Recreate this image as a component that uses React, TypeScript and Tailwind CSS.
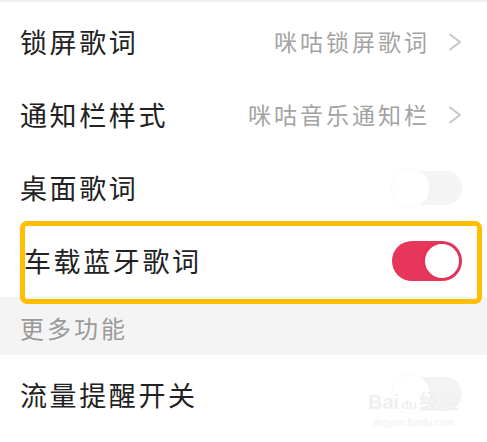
import React from 'react';

const font = { fontFamily: '"Noto Sans CJK SC", "Noto Sans", sans-serif' };

function Chevron() {
  return (
    <svg width="14" height="18" viewBox="0 0 14 18" className="shrink-0">
      <polyline points="2,1.5 12,9 2,16.5" fill="none" stroke="#c4c4c4" strokeWidth="1.8" strokeLinejoin="round" strokeLinecap="round" />
    </svg>
  );
}

function Toggle({ on }: { on: boolean }) {
  if (on) {
    return (
      <div className="w-[70px] h-[40px] rounded-full bg-[#e8365b] flex items-center justify-end pr-[1px]">
        <div className="w-[38px] h-[38px] rounded-full bg-white border-2 border-[#e0325a]" />
      </div>
    );
  }
  return (
    <div className="w-[70px] h-[34px] rounded-full bg-[#f4f4f4] flex items-center">
      <div className="w-[38px] h-[38px] rounded-full bg-white shadow-[0_0_3px_rgba(0,0,0,0.06)]" />
    </div>
  );
}

function Row({ title, value, toggle, h = 'h-[73px]', pl = 'pl-[20px]' }: { title: string; value?: string; toggle?: boolean; h?: string; pl?: string }) {
  return (
    <div className={`flex items-center justify-between pr-[25px] bg-white ${h} ${pl}`}>
      <span className="text-[27px] tracking-[2.6px] text-[#222] leading-none">{title}</span>
      {value !== undefined ? (
        <div className="flex items-center gap-[18px]">
          <span className="text-[23px] tracking-[3px] text-[#a3a3a3] leading-none">{value}</span>
          <Chevron />
        </div>
      ) : (
        <Toggle on={!!toggle} />
      )}
    </div>
  );
}

export default function App() {
  return (
    <div className="relative w-[487px] h-[442px] overflow-hidden bg-white" style={font}>
      <div className="h-[5px] border-t-2 border-[#f0f0f0]" />
      <Row title="锁屏歌词" value="咪咕锁屏歌词" />
      <Row title="通知栏样式" value="咪咕音乐通知栏" />
      <Row title="桌面歌词" toggle={false} />
      <Row title="车载蓝牙歌词" toggle={true} pl="pl-[24px]" />
      <div className="h-[58px] bg-[#f4f4f4] flex items-center pl-[20px] pt-[4px]">
        <span className="text-[24px] tracking-[3px] text-[#9a9a9a] leading-none">更多功能</span>
      </div>
      <Row title="流量提醒开关" toggle={false} h="h-[78px]" />

      {/* highlight box */}
      <div className="absolute left-[20px] top-[221px] w-[462px] h-[83px] border-[5px] border-[#ffbe00] rounded-[7px]" />

      {/* watermark */}
      <div className="absolute left-[368px] top-[392px] flex flex-col items-center text-[#f0f0f0] leading-none" style={{ fontFamily: '"Liberation Sans", "Noto Sans CJK SC", sans-serif' }}>
        <span className="text-[20px] font-bold">Bai<span className="text-[13px] px-[2px]">du</span>经验</span>
        <span className="text-[10px] mt-[6px]">jingyan.baidu.com</span>
      </div>
    </div>
  );
}
